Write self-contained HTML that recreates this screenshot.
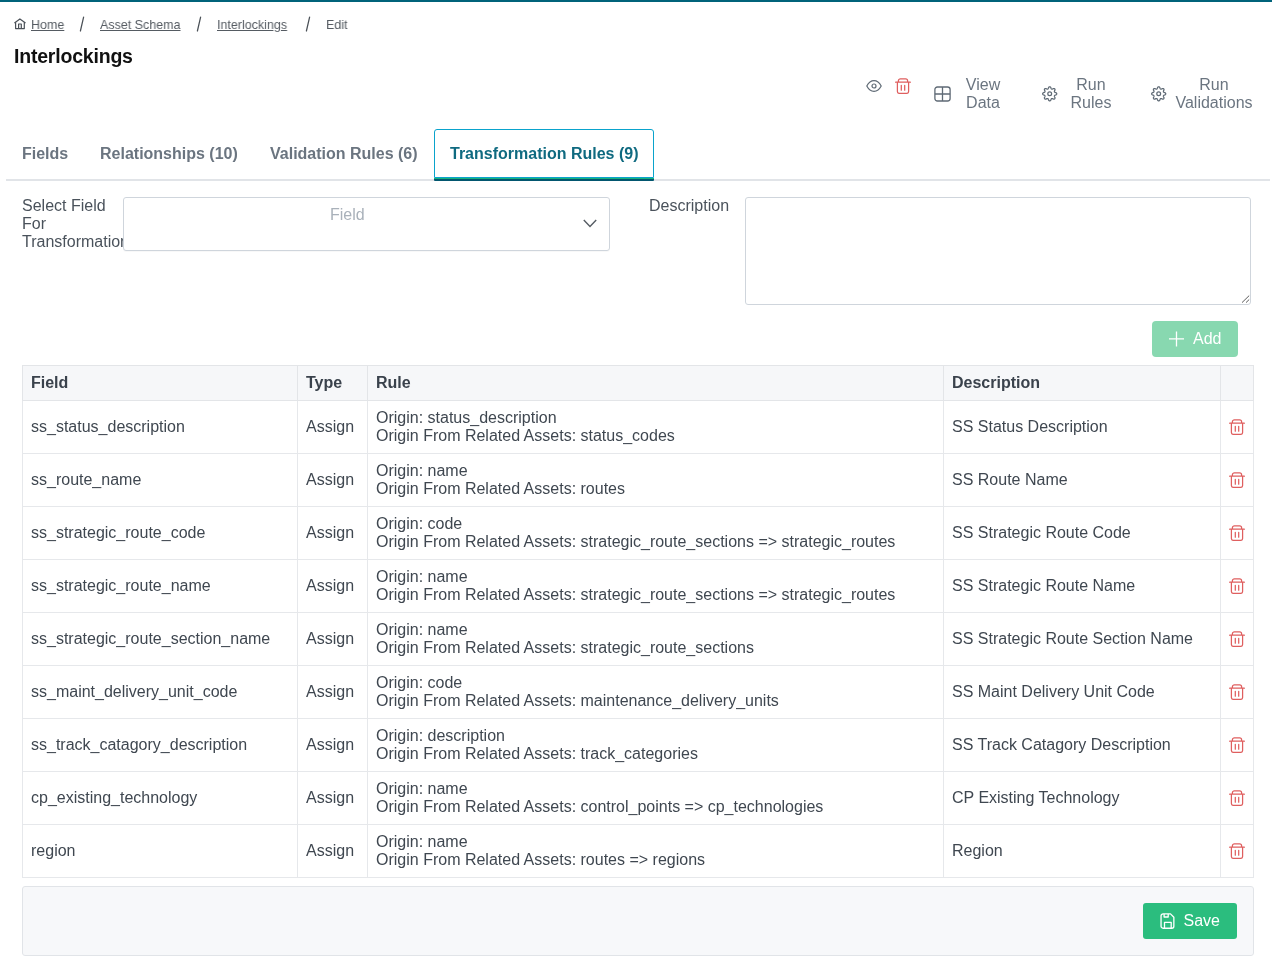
<!DOCTYPE html>
<html>
<head>
<meta charset="utf-8">
<style>
* { box-sizing: border-box; margin: 0; padding: 0; }
html, body { width: 1272px; height: 972px; overflow: hidden; background: #fff; } body > * { will-change: transform; }
body { font-family: "Liberation Sans", sans-serif; color: #3d4550; position: relative; }
.abs { position: absolute; }
.topbar { left: 0; top: 0; width: 1272px; height: 2px; background: #00637a; }
.crumb { top: 16.6px; font-size: 13.5px; transform: scaleX(0.925); transform-origin: 0 0; line-height: 16px; color: #555b62; white-space: nowrap; }
.crumb u { text-decoration: underline; }
.sep { top: 17px; font-size: 16px; line-height: 18px; color: #444; }
h1 { position: absolute; left: 14px; top: 45px; font-size: 19.5px; letter-spacing: -0.2px; line-height: 22px; font-weight: bold; color: #111; }
.act { font-size: 16px; line-height: 18px; color: #6b7580; text-align: center; white-space: nowrap; }
svg { display: block; }
.tab { top: 145px; font-size: 16px; line-height: 18px; font-weight: bold; color: #6b7580; white-space: nowrap; }
.tabline { left: 6px; top: 179px; width: 1264px; height: 2px; background: #e1e4e8; }
.activetab { left: 434px; top: 129px; width: 220px; height: 49px; border: 1px solid #0aa3cc; border-radius: 3px 3px 0 0; background: #fff; }
.tabg { left: 434px; top: 178px; width: 220px; height: 1px; background: #14b37e; }
.tabd { left: 434px; top: 179px; width: 220px; height: 2px; background: #02566f; border-radius: 0 0 1px 1px; }
.label { font-size: 16px; line-height: 18px; color: #4a525b; }
.select { left: 123px; top: 197px; width: 487px; height: 54px; border: 1px solid #cfd5dc; border-radius: 3px; background: #fff; box-shadow: 0 1px 1px rgba(0,0,0,0.03); }
.textarea { left: 745px; top: 197px; width: 506px; height: 108px; border: 1px solid #cfd5dc; border-radius: 3px; background: #fff; }
.btn-add { left: 1152px; top: 321px; width: 86px; height: 36px; background: #88d8b0; border-radius: 4px; color: #fff; }
table { position: absolute; left: 22px; top: 365px; border-collapse: collapse; table-layout: fixed; width: 1231px; }
td, th { border: 1px solid #e6e8eb; font-size: 16px; line-height: 18px; padding: 8px 8px; text-align: left; vertical-align: middle; white-space: nowrap; overflow: hidden; }
th { background: #f6f7f9; font-weight: bold; color: #3a424c; border: 1px solid #e3e5e8; }
td { height: 53px; color: #3f4750; }
td.del { padding: 0 0 0 8px; }
th { height: 35px; }
.footer { left: 22px; top: 886px; width: 1232px; height: 70px; background: #f7f8fa; border: 1px solid #e1e4e8; border-radius: 3px; }
.btn-save { left: 1143px; top: 903px; width: 94px; height: 36px; background: #2bbd7e; border-radius: 3px; color: #fff; }
</style>
</head>
<body>
<svg width="0" height="0" style="position:absolute"><defs><symbol id="trash" viewBox="0 0 16 16"><path d="M0.6 4.2h14.8 M3.4 4.2V2.8a2 2 0 0 1 2-2h5.2a2 2 0 0 1 2 2v1.4 M2.4 4.2v9.2a2 2 0 0 0 2 2h7.2a2 2 0 0 0 2-2V4.2 M6.3 7.3v4.9 M9.7 7.3v4.9"/></symbol></defs></svg>
<div class="abs topbar"></div>

<!-- breadcrumb -->
<svg class="abs" style="left:13px;top:18px" width="14" height="12" viewBox="0 0 14 12" fill="none" stroke="#4b5158" stroke-width="1.2" stroke-linejoin="round"><path d="M1.4 5 L6.9 0.9 L12.5 5 M2.6 4.2 V10.6 H11.3 V4.2 M5.6 10.6 V6 H8.3 V10.6"/></svg>
<div class="abs crumb" style="left:31px"><u>Home</u></div>
<svg class="abs" style="left:76.9px;top:14px" width="10" height="20" viewBox="0 0 10 20" stroke="#4a5057" stroke-width="1.25" stroke-linecap="round"><path d="M6.6 3.2 L3.4 17.0"/></svg>
<div class="abs crumb" style="left:100px"><u>Asset Schema</u></div>
<svg class="abs" style="left:193.65px;top:14px" width="10" height="20" viewBox="0 0 10 20" stroke="#4a5057" stroke-width="1.25" stroke-linecap="round"><path d="M6.6 3.2 L3.4 17.0"/></svg>
<div class="abs crumb" style="left:217px"><u>Interlockings</u></div>
<svg class="abs" style="left:303.1px;top:14px" width="10" height="20" viewBox="0 0 10 20" stroke="#4a5057" stroke-width="1.25" stroke-linecap="round"><path d="M6.6 3.2 L3.4 17.0"/></svg>
<div class="abs crumb" style="left:326px">Edit</div>

<h1>Interlockings</h1>

<!-- actions -->
<svg class="abs" style="left:866px;top:80px" width="16" height="12" viewBox="0 0 16 12" fill="none" stroke="#5f6a75" stroke-width="1.2"><path d="M0.8 6 C3 1.8 6 0.7 8 0.7 C10 0.7 13 1.8 15.2 6 C13 10.2 10 11.3 8 11.3 C6 11.3 3 10.2 0.8 6 Z"/><circle cx="8" cy="6" r="2"/></svg>
<svg class="abs" style="left:895px;top:78px" width="16" height="16" viewBox="0 0 16 16" fill="none" stroke="#df5f5f" stroke-width="1.25" stroke-linecap="round"><path d="M0.6 4.2h14.8 M3.4 4.2V2.8a2 2 0 0 1 2-2h5.2a2 2 0 0 1 2 2v1.4 M2.4 4.2v9.2a2 2 0 0 0 2 2h7.2a2 2 0 0 0 2-2V4.2 M6.3 7.3v4.9 M9.7 7.3v4.9"/></svg>
<svg class="abs" style="left:934px;top:86px" width="17" height="16" viewBox="0 0 17 16" fill="none" stroke="#5f6a75" stroke-width="1.3"><rect x="0.9" y="1" width="15.2" height="14" rx="2.5"/><path d="M0.9 8 H16.1 M8.5 1 V15"/></svg>
<div class="abs act" style="left:953px;top:76px;width:60px">View<br>Data</div>
<svg class="abs" style="left:1041px;top:85px" width="18" height="18" viewBox="0 0 18 18" fill="none" stroke="#5f6a75" stroke-width="1.25" stroke-linejoin="round"><path d="M8.70 1.75 L8.98 1.79 L9.24 1.90 L9.49 2.09 L9.72 2.36 L9.89 2.82 L10.03 3.27 L10.18 3.56 L10.33 3.78 L10.49 3.94 L10.67 4.04 L10.87 4.09 L11.10 4.09 L11.36 4.05 L11.67 3.95 L12.09 3.73 L12.53 3.53 L12.88 3.50 L13.19 3.54 L13.46 3.65 L13.69 3.81 L13.85 4.04 L13.96 4.31 L14.00 4.62 L13.97 4.97 L13.77 5.41 L13.55 5.83 L13.45 6.14 L13.41 6.40 L13.41 6.63 L13.46 6.83 L13.56 7.01 L13.72 7.17 L13.94 7.32 L14.23 7.47 L14.68 7.61 L15.14 7.78 L15.41 8.01 L15.60 8.26 L15.71 8.52 L15.75 8.80 L15.71 9.08 L15.60 9.34 L15.41 9.59 L15.14 9.82 L14.68 9.99 L14.23 10.13 L13.94 10.28 L13.72 10.43 L13.56 10.59 L13.46 10.77 L13.41 10.97 L13.41 11.20 L13.45 11.46 L13.55 11.77 L13.77 12.19 L13.97 12.63 L14.00 12.98 L13.96 13.29 L13.85 13.56 L13.69 13.79 L13.46 13.95 L13.19 14.06 L12.88 14.10 L12.53 14.07 L12.09 13.87 L11.67 13.65 L11.36 13.55 L11.10 13.51 L10.87 13.51 L10.67 13.56 L10.49 13.66 L10.33 13.82 L10.18 14.04 L10.03 14.33 L9.89 14.78 L9.72 15.24 L9.49 15.51 L9.24 15.70 L8.98 15.81 L8.70 15.85 L8.42 15.81 L8.16 15.70 L7.91 15.51 L7.68 15.24 L7.51 14.78 L7.37 14.33 L7.22 14.04 L7.07 13.82 L6.91 13.66 L6.73 13.56 L6.53 13.51 L6.30 13.51 L6.04 13.55 L5.73 13.65 L5.31 13.87 L4.87 14.07 L4.52 14.10 L4.21 14.06 L3.94 13.95 L3.71 13.79 L3.55 13.56 L3.44 13.29 L3.40 12.98 L3.43 12.63 L3.63 12.19 L3.85 11.77 L3.95 11.46 L3.99 11.20 L3.99 10.97 L3.94 10.77 L3.84 10.59 L3.68 10.43 L3.46 10.28 L3.17 10.13 L2.72 9.99 L2.26 9.82 L1.99 9.59 L1.80 9.34 L1.69 9.08 L1.65 8.80 L1.69 8.52 L1.80 8.26 L1.99 8.01 L2.26 7.78 L2.72 7.61 L3.17 7.47 L3.46 7.32 L3.68 7.17 L3.84 7.01 L3.94 6.83 L3.99 6.63 L3.99 6.40 L3.95 6.14 L3.85 5.83 L3.63 5.41 L3.43 4.97 L3.40 4.62 L3.44 4.31 L3.55 4.04 L3.71 3.81 L3.94 3.65 L4.21 3.54 L4.52 3.50 L4.87 3.53 L5.31 3.73 L5.73 3.95 L6.04 4.05 L6.30 4.09 L6.53 4.09 L6.73 4.04 L6.91 3.94 L7.07 3.78 L7.22 3.56 L7.37 3.27 L7.51 2.82 L7.68 2.36 L7.91 2.09 L8.16 1.90 L8.42 1.79 Z"/><circle cx="8.7" cy="8.8" r="1.9"/></svg>
<div class="abs act" style="left:1061px;top:76px;width:60px">Run<br>Rules</div>
<svg class="abs" style="left:1150px;top:85px" width="18" height="18" viewBox="0 0 18 18" fill="none" stroke="#5f6a75" stroke-width="1.25" stroke-linejoin="round"><path d="M8.70 1.75 L8.98 1.79 L9.24 1.90 L9.49 2.09 L9.72 2.36 L9.89 2.82 L10.03 3.27 L10.18 3.56 L10.33 3.78 L10.49 3.94 L10.67 4.04 L10.87 4.09 L11.10 4.09 L11.36 4.05 L11.67 3.95 L12.09 3.73 L12.53 3.53 L12.88 3.50 L13.19 3.54 L13.46 3.65 L13.69 3.81 L13.85 4.04 L13.96 4.31 L14.00 4.62 L13.97 4.97 L13.77 5.41 L13.55 5.83 L13.45 6.14 L13.41 6.40 L13.41 6.63 L13.46 6.83 L13.56 7.01 L13.72 7.17 L13.94 7.32 L14.23 7.47 L14.68 7.61 L15.14 7.78 L15.41 8.01 L15.60 8.26 L15.71 8.52 L15.75 8.80 L15.71 9.08 L15.60 9.34 L15.41 9.59 L15.14 9.82 L14.68 9.99 L14.23 10.13 L13.94 10.28 L13.72 10.43 L13.56 10.59 L13.46 10.77 L13.41 10.97 L13.41 11.20 L13.45 11.46 L13.55 11.77 L13.77 12.19 L13.97 12.63 L14.00 12.98 L13.96 13.29 L13.85 13.56 L13.69 13.79 L13.46 13.95 L13.19 14.06 L12.88 14.10 L12.53 14.07 L12.09 13.87 L11.67 13.65 L11.36 13.55 L11.10 13.51 L10.87 13.51 L10.67 13.56 L10.49 13.66 L10.33 13.82 L10.18 14.04 L10.03 14.33 L9.89 14.78 L9.72 15.24 L9.49 15.51 L9.24 15.70 L8.98 15.81 L8.70 15.85 L8.42 15.81 L8.16 15.70 L7.91 15.51 L7.68 15.24 L7.51 14.78 L7.37 14.33 L7.22 14.04 L7.07 13.82 L6.91 13.66 L6.73 13.56 L6.53 13.51 L6.30 13.51 L6.04 13.55 L5.73 13.65 L5.31 13.87 L4.87 14.07 L4.52 14.10 L4.21 14.06 L3.94 13.95 L3.71 13.79 L3.55 13.56 L3.44 13.29 L3.40 12.98 L3.43 12.63 L3.63 12.19 L3.85 11.77 L3.95 11.46 L3.99 11.20 L3.99 10.97 L3.94 10.77 L3.84 10.59 L3.68 10.43 L3.46 10.28 L3.17 10.13 L2.72 9.99 L2.26 9.82 L1.99 9.59 L1.80 9.34 L1.69 9.08 L1.65 8.80 L1.69 8.52 L1.80 8.26 L1.99 8.01 L2.26 7.78 L2.72 7.61 L3.17 7.47 L3.46 7.32 L3.68 7.17 L3.84 7.01 L3.94 6.83 L3.99 6.63 L3.99 6.40 L3.95 6.14 L3.85 5.83 L3.63 5.41 L3.43 4.97 L3.40 4.62 L3.44 4.31 L3.55 4.04 L3.71 3.81 L3.94 3.65 L4.21 3.54 L4.52 3.50 L4.87 3.53 L5.31 3.73 L5.73 3.95 L6.04 4.05 L6.30 4.09 L6.53 4.09 L6.73 4.04 L6.91 3.94 L7.07 3.78 L7.22 3.56 L7.37 3.27 L7.51 2.82 L7.68 2.36 L7.91 2.09 L8.16 1.90 L8.42 1.79 Z"/><circle cx="8.7" cy="8.8" r="1.9"/></svg>
<div class="abs act" style="left:1164px;top:76px;width:100px">Run<br>Validations</div>

<!-- tabs -->
<div class="abs tabline"></div>
<div class="abs activetab"></div><div class="abs tabg"></div><div class="abs tabd"></div>
<div class="abs tab" style="left:22px">Fields</div>
<div class="abs tab" style="left:100px">Relationships (10)</div>
<div class="abs tab" style="left:270px">Validation Rules (6)</div>
<div class="abs tab" style="left:450px;color:#0f6a80">Transformation Rules (9)</div>

<!-- form -->
<div class="abs label" style="left:22px;top:197px;width:110px">Select Field<br>For<br>Transformation</div>
<div class="abs select"></div>
<div class="abs label" style="left:330px;top:206px;color:#a9b1ba">Field</div>
<svg class="abs" style="left:583px;top:219px" width="14" height="9" viewBox="0 0 14 9" fill="none" stroke="#555c63" stroke-width="1.4"><path d="M0.8 1 L7 7.5 L13.2 1"/></svg>
<div class="abs label" style="left:649px;top:197px">Description</div>
<div class="abs textarea"></div>
<svg class="abs" style="left:1238px;top:290px" width="14" height="14" viewBox="0 0 14 14" stroke="#5a5a5a" stroke-width="1"><path d="M4 12.6 L11.2 5.6 M8 12.6 L11.2 9.5"/></svg>
<div class="abs btn-add">
  <svg class="abs" style="left:17px;top:10px" width="15" height="16" viewBox="0 0 15 16" fill="none" stroke="#fff" stroke-width="1.3"><path d="M7.5 0.5 V15.5 M0 7.8 H15"/></svg>
  <div class="abs" style="left:41px;top:9px;font-size:16px;line-height:18px">Add</div>
</div>

<!-- table -->
<table>
<colgroup><col style="width:275px"><col style="width:70px"><col style="width:576px"><col style="width:277px"><col style="width:33px"></colgroup>
<thead><tr><th>Field</th><th>Type</th><th>Rule</th><th>Description</th><th></th></tr></thead>
<tbody>
<tr><td>ss_status_description</td><td>Assign</td><td>Origin: status_description<br>Origin From Related Assets: status_codes</td><td>SS Status Description</td><td class="del"><svg width="16" height="16" fill="none" stroke="#df5f5f" stroke-width="1.25" stroke-linecap="round"><use href="#trash"/></svg></td></tr>
<tr><td>ss_route_name</td><td>Assign</td><td>Origin: name<br>Origin From Related Assets: routes</td><td>SS Route Name</td><td class="del"><svg width="16" height="16" fill="none" stroke="#df5f5f" stroke-width="1.25" stroke-linecap="round"><use href="#trash"/></svg></td></tr>
<tr><td>ss_strategic_route_code</td><td>Assign</td><td>Origin: code<br>Origin From Related Assets: strategic_route_sections =&gt; strategic_routes</td><td>SS Strategic Route Code</td><td class="del"><svg width="16" height="16" fill="none" stroke="#df5f5f" stroke-width="1.25" stroke-linecap="round"><use href="#trash"/></svg></td></tr>
<tr><td>ss_strategic_route_name</td><td>Assign</td><td>Origin: name<br>Origin From Related Assets: strategic_route_sections =&gt; strategic_routes</td><td>SS Strategic Route Name</td><td class="del"><svg width="16" height="16" fill="none" stroke="#df5f5f" stroke-width="1.25" stroke-linecap="round"><use href="#trash"/></svg></td></tr>
<tr><td>ss_strategic_route_section_name</td><td>Assign</td><td>Origin: name<br>Origin From Related Assets: strategic_route_sections</td><td>SS Strategic Route Section Name</td><td class="del"><svg width="16" height="16" fill="none" stroke="#df5f5f" stroke-width="1.25" stroke-linecap="round"><use href="#trash"/></svg></td></tr>
<tr><td>ss_maint_delivery_unit_code</td><td>Assign</td><td>Origin: code<br>Origin From Related Assets: maintenance_delivery_units</td><td>SS Maint Delivery Unit Code</td><td class="del"><svg width="16" height="16" fill="none" stroke="#df5f5f" stroke-width="1.25" stroke-linecap="round"><use href="#trash"/></svg></td></tr>
<tr><td>ss_track_catagory_description</td><td>Assign</td><td>Origin: description<br>Origin From Related Assets: track_categories</td><td>SS Track Catagory Description</td><td class="del"><svg width="16" height="16" fill="none" stroke="#df5f5f" stroke-width="1.25" stroke-linecap="round"><use href="#trash"/></svg></td></tr>
<tr><td>cp_existing_technology</td><td>Assign</td><td>Origin: name<br>Origin From Related Assets: control_points =&gt; cp_technologies</td><td>CP Existing Technology</td><td class="del"><svg width="16" height="16" fill="none" stroke="#df5f5f" stroke-width="1.25" stroke-linecap="round"><use href="#trash"/></svg></td></tr>
<tr><td>region</td><td>Assign</td><td>Origin: name<br>Origin From Related Assets: routes =&gt; regions</td><td>Region</td><td class="del"><svg width="16" height="16" fill="none" stroke="#df5f5f" stroke-width="1.25" stroke-linecap="round"><use href="#trash"/></svg></td></tr>
</tbody>
</table>

<!-- footer -->
<div class="abs footer"></div>
<div class="abs btn-save">
  <svg class="abs" style="left:16px;top:10px" width="16" height="16" viewBox="0 0 16 16" fill="none" stroke="#fff" stroke-width="1.3" stroke-linejoin="round"><path d="M4.05 0.85 H11.5 L14.85 4.2 V13.25 a2 2 0 0 1 -2 2 H4.05 a2 2 0 0 1 -2 -2 V2.85 a2 2 0 0 1 2 -2 Z M5.5 15.25 V9.3 H12.2 V15.25 M5.1 0.85 V4 H9.2 V0.85"/></svg>
  <div class="abs" style="left:40.5px;top:9px;font-size:16px;line-height:18px">Save</div>
</div>
</body>
</html>
